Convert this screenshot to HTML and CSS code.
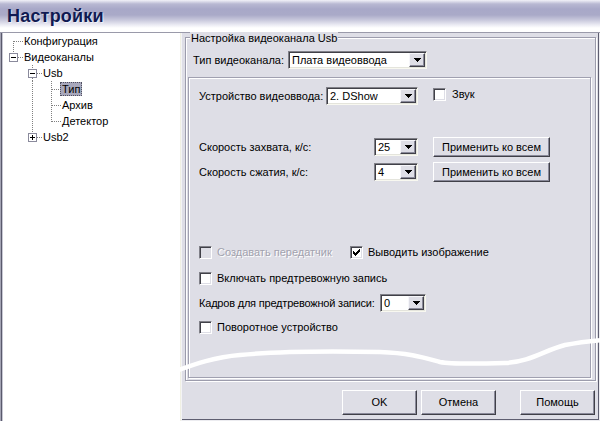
FILE: index.html
```html
<!DOCTYPE html>
<html lang="ru">
<head>
<meta charset="utf-8">
<title>Настройки</title>
<link rel="stylesheet" href="styles.css">
</head>
<body>
<div class="window">
  <header class="titlebar"><h1 class="title">Настройки</h1></header>
  <div class="main">
    <nav class="tree">
      <div class="node">
        <svg class="cell" width="19" height="16"><line class="dot" x1="8.5" y1="8" x2="8.5" y2="16"/><line class="dot" x1="9" y1="8.5" x2="19" y2="8.5"/></svg>
        <span class="label">Конфигурация</span>
      </div>
      <div class="node">
        <svg class="cell" width="19" height="16"><line class="dot" x1="8.5" y1="0" x2="8.5" y2="4"/><rect class="box" x="4.5" y="4.5" width="8" height="8"/><line class="sign" x1="6" y1="8.5" x2="11" y2="8.5"/><line class="dot" x1="13" y1="8.5" x2="19" y2="8.5"/></svg>
        <span class="label">Видеоканалы</span>
      </div>
      <div class="node">
        <span class="indent"></span>
        <svg class="cell" width="19" height="16"><line class="dot" x1="8.5" y1="0" x2="8.5" y2="4"/><line class="dot" x1="8.5" y1="13" x2="8.5" y2="16"/><rect class="box" x="4.5" y="4.5" width="8" height="8"/><line class="sign" x1="6" y1="8.5" x2="11" y2="8.5"/><line class="dot" x1="13" y1="8.5" x2="19" y2="8.5"/></svg>
        <span class="label">Usb</span>
      </div>
      <div class="node">
        <span class="indent"></span>
        <svg class="cell" width="19" height="16"><line class="dot" x1="8.5" y1="0" x2="8.5" y2="16"/></svg>
        <svg class="cell" width="19" height="16"><line class="dot" x1="8.5" y1="0" x2="8.5" y2="16"/><line class="dot" x1="9" y1="8.5" x2="19" y2="8.5"/></svg>
        <span class="label selected">Тип</span>
      </div>
      <div class="node">
        <span class="indent"></span>
        <svg class="cell" width="19" height="16"><line class="dot" x1="8.5" y1="0" x2="8.5" y2="16"/></svg>
        <svg class="cell" width="19" height="16"><line class="dot" x1="8.5" y1="0" x2="8.5" y2="16"/><line class="dot" x1="9" y1="8.5" x2="19" y2="8.5"/></svg>
        <span class="label">Архив</span>
      </div>
      <div class="node">
        <span class="indent"></span>
        <svg class="cell" width="19" height="16"><line class="dot" x1="8.5" y1="0" x2="8.5" y2="16"/></svg>
        <svg class="cell" width="19" height="16"><line class="dot" x1="8.5" y1="0" x2="8.5" y2="9"/><line class="dot" x1="9" y1="8.5" x2="19" y2="8.5"/></svg>
        <span class="label">Детектор</span>
      </div>
      <div class="node">
        <span class="indent"></span>
        <svg class="cell" width="19" height="16"><line class="dot" x1="8.5" y1="0" x2="8.5" y2="4"/><rect class="box" x="4.5" y="4.5" width="8" height="8"/><line class="sign" x1="6" y1="8.5" x2="11" y2="8.5"/><line class="sign" x1="8.5" y1="6" x2="8.5" y2="11"/><line class="dot" x1="13" y1="8.5" x2="19" y2="8.5"/></svg>
        <span class="label">Usb2</span>
      </div>
    </nav>

    <section class="content">
      <div class="group">
        <div class="group-title">Настройка видеоканала Usb</div>
        <div class="row type-row">
          <span class="lbl lbl-type">Тип видеоканала:</span>
          <div class="combo combo-type">
            <span class="combo-text">Плата видеоввода</span>
            <span class="combo-btn"><svg width="7" height="4"><path d="M0 0h7v1H0zM1 1h5v1H1zM2 2h3v1H2zM3 3h1v1H3z"/></svg></span>
          </div>
        </div>

        <div class="panel">
          <div class="row r-device">
            <span class="lbl lbl-device">Устройство видеоввода:</span>
            <div class="combo combo-device">
              <span class="combo-text">2. DShow</span>
              <span class="combo-btn"><svg width="7" height="4"><path d="M0 0h7v1H0zM1 1h5v1H1zM2 2h3v1H2zM3 3h1v1H3z"/></svg></span>
            </div>
            <label class="check check-sound"><span class="cb"></span><span class="check-text">Звук</span></label>
          </div>

          <div class="row r-speed">
            <span class="lbl lbl-speed">Скорость захвата, к/с:</span>
            <div class="combo combo-small">
              <span class="combo-text">25</span>
              <span class="combo-btn"><svg width="7" height="4"><path d="M0 0h7v1H0zM1 1h5v1H1zM2 2h3v1H2zM3 3h1v1H3z"/></svg></span>
            </div>
            <button class="btn btn-apply">Применить ко всем</button>
          </div>

          <div class="row r-speed r-second">
            <span class="lbl lbl-speed">Скорость сжатия, к/с:</span>
            <div class="combo combo-small">
              <span class="combo-text">4</span>
              <span class="combo-btn"><svg width="7" height="4"><path d="M0 0h7v1H0zM1 1h5v1H1zM2 2h3v1H2zM3 3h1v1H3z"/></svg></span>
            </div>
            <button class="btn btn-apply">Применить ко всем</button>
          </div>

          <div class="row r-check r-first-check">
            <label class="check check-first disabled"><span class="cb"></span><span class="check-text">Создавать передатчик</span></label>
            <label class="check"><span class="cb"><svg width="7" height="7"><path d="M6 0h1v1H6zM5 1h2v1H5zM0 2h1v1H0zM4 2h3v1H4zM0 3h2v1H0zM3 3h3v1H3zM0 4h5v1H0zM1 5h3v1H1zM2 6h1v1H2z"/></svg></span><span class="check-text">Выводить изображение</span></label>
          </div>

          <div class="row r-check r-gap10">
            <label class="check"><span class="cb"></span><span class="check-text">Включать предтревожную запись</span></label>
          </div>

          <div class="row r-frames">
            <span class="lbl lbl-frames">Кадров для предтревожной записи:</span>
            <div class="combo combo-frames">
              <span class="combo-text">0</span>
              <span class="combo-btn"><svg width="7" height="4"><path d="M0 0h7v1H0zM1 1h5v1H1zM2 2h3v1H2zM3 3h1v1H3z"/></svg></span>
            </div>
          </div>

          <div class="row r-check r-gap7">
            <label class="check"><span class="cb"></span><span class="check-text">Поворотное устройство</span></label>
          </div>
        </div>
      </div>

      <div class="buttons">
        <button class="btn btn-dlg">OK</button>
        <button class="btn btn-dlg">Отмена</button>
        <button class="btn btn-dlg btn-help">Помощь</button>
      </div>
    </section>
  </div>

  <svg class="scribble" width="600" height="421" viewBox="0 0 600 421">
    <path d="M176 371 C 195 364, 215 357, 240 355 C 270 352, 330 351, 380 352 C 410 353, 425 358, 440 362 C 450 364, 470 364, 505 363 C 530 362, 545 350, 565 345 C 580 342, 590 341, 602 340"/>
  </svg>
</div>
</body>
</html>
```

FILE: styles.css
```css
* { box-sizing: border-box; }

html, body {
  margin: 0;
  padding: 0;
}

body {
  width: 600px;
  height: 421px;
  overflow: hidden;
  background: #ffffff;
  font-family: "Liberation Sans", Arial, sans-serif;
  font-size: 11px;
  color: #000;
}

.window {
  position: relative;
  width: 600px;
  height: 421px;
  display: flex;
  flex-direction: column;
}

/* ---------- title ---------- */
.titlebar {
  height: 32px;
  flex: none;
  padding-left: 7px;
  background: linear-gradient(to bottom,
    #f2f2f8 0px, #b8b8d2 4px, #a8a8c8 9px, #aaaac8 15px,
    #c8c8dc 20px, #ececf4 25px, #ffffff 28px, #ffffff 32px);
}

.title {
  margin: 0;
  font-size: 18px;
  font-weight: bold;
  line-height: 32px;
  color: #101a52;
  text-shadow: 1px 1px 1px rgba(255, 255, 255, 0.7);
  letter-spacing: 0.2px;
}

/* ---------- main ---------- */
.main {
  flex: 1;
  display: flex;
  border-top: 1px solid #9a9aaa;
  min-height: 0;
}

/* ---------- tree ---------- */
.tree {
  width: 181px;
  flex: none;
  background: #ffffff;
  border-left: 1px solid #a4a4b4;
  box-shadow: inset 1px 0 0 #5a5a6c, inset 2px 0 0 #c8c8d4;
  border-right: 1px solid #f0f0e4;
  padding-left: 4px;
}

.node {
  display: flex;
  align-items: center;
  height: 16px;
}

.indent {
  width: 19px;
  flex: none;
}

.cell {
  display: block;
  flex: none;
  shape-rendering: crispEdges;
}

.dot {
  stroke: #808080;
  stroke-width: 1;
  stroke-dasharray: 1 1;
}

.box {
  fill: #ffffff;
  stroke: #8a8a9c;
  stroke-width: 1;
}

.sign {
  stroke: #000;
  stroke-width: 1;
}

.label {
  line-height: 14px;
  white-space: nowrap;
}

.selected {
  background: #a8a8bc;
  outline: 1px dotted #505060;
  outline-offset: -1px;
  padding: 0 2px;
  margin-left: -2px;
}

/* ---------- content ---------- */
.content {
  flex: 1;
  display: flex;
  flex-direction: column;
  background: #dedee6;
  border-left: 1px solid #f4f4f6;
  border-right: 1px solid #ececf0;
  border-bottom: 1px solid #ececf0;
  box-shadow: inset -1px -1px 0 #5e5e70;
}

.group {
  margin: 4px 3px 0 3px;
  height: 344px;
  flex: none;
  display: flex;
  flex-direction: column;
  border: 1px solid #9c9cac;
  box-shadow: inset 1px 1px 0 #ffffff, 1px 1px 0 #ffffff;
  padding: 0 4px 2px 2px;
}

.group-title {
  width: fit-content;
  margin: -6px 0 0 2px;
  padding: 0 1px;
  height: 13px;
  line-height: 13px;
  background: #dedee6;
}

.row {
  display: flex;
  align-items: center;
  white-space: nowrap;
}

.type-row {
  margin-top: 6px;
  height: 18px;
  padding-left: 5px;
}

.lbl {
  flex: none;
  line-height: 13px;
  overflow: hidden;
}

.lbl-type { width: 95px; }
.lbl-device { width: 127px; }
.lbl-speed { width: 175px; }
.lbl-frames {
  width: 181px;
  letter-spacing: -0.2px;
}

/* combo box */
.combo {
  flex: none;
  height: 18px;
  display: flex;
  align-items: center;
  background: #ffffff;
  border: 1px solid;
  border-color: #808088 #f8f8f0 #f8f8f0 #808088;
  box-shadow: inset 1px 1px 0 #404048, inset -1px -1px 0 #e4e4dc;
  padding: 1px;
}

.combo-text {
  flex: 1;
  padding-left: 2px;
  line-height: 13px;
  overflow: hidden;
}

.combo-btn {
  flex: none;
  width: 16px;
  height: 14px;
  display: flex;
  align-items: center;
  justify-content: center;
  background: #dedee6;
  border: 1px solid;
  border-color: #f6f6fa #404048 #404048 #f6f6fa;
  box-shadow: inset -1px -1px 0 #8a8a9a;
}

.combo-btn svg {
  display: block;
  fill: #000;
  shape-rendering: crispEdges;
}

.combo-type { width: 139px; }
.combo-device { width: 92px; }
.combo-small { width: 44px; }
.combo-frames { width: 46px; }

/* buttons */
.btn {
  font-family: "Liberation Sans", Arial, sans-serif;
  font-size: 11px;
  color: #000;
  background: #dedee6;
  border: 1px solid;
  border-color: #ffffff #404048 #404048 #ffffff;
  box-shadow: inset -1px -1px 0 #8a8a9a;
  padding: 0;
  margin: 0;
  line-height: 13px;
}

.btn-apply {
  width: 117px;
  height: 20px;
  margin-left: 15px;
  flex: none;
}

/* check boxes */
.check {
  display: flex;
  align-items: center;
  flex: none;
}

.cb {
  width: 13px;
  height: 13px;
  flex: none;
  background: #ffffff;
  border: 1px solid;
  border-color: #808088 #ffffff #ffffff #808088;
  box-shadow: inset 1px 1px 0 #404048, inset -1px -1px 0 #dedee6;
  padding: 2px;
}

.cb svg {
  display: block;
  fill: #000;
  shape-rendering: crispEdges;
}

.check-text {
  margin-left: 5px;
  line-height: 13px;
}

.disabled .cb {
  background: #dedee6;
}

.disabled .check-text {
  color: #a2a2ae;
  text-shadow: 1px 1px 0 #ffffff;
}

.check-first { width: 151px; }

.check-sound {
  align-self: flex-start;
  margin-left: 15px;
  margin-top: 1px;
}

.check-sound .check-text {
  margin-left: 6px;
  margin-top: -1px;
}

/* inner panel */
.panel {
  flex: 1;
  margin-top: 8px;
  border: 1px solid #a0a0b0;
  box-shadow: inset 1px 1px 0 #ffffff, 1px 1px 0 #ffffff;
  padding-left: 10px;
}

.r-device {
  margin-top: 9px;
  height: 18px;
}

.r-speed {
  margin-top: 32px;
  height: 20px;
}

.r-speed.r-second {
  margin-top: 5px;
}

.r-check {
  height: 16px;
}

.r-first-check { margin-top: 62px; }
.r-gap10 { margin-top: 10px; }
.r-gap7 { margin-top: 7px; }

.r-frames {
  margin-top: 8px;
  height: 18px;
}

/* dialog buttons */
.buttons {
  display: flex;
  justify-content: flex-end;
  gap: 4px;
  margin-top: 9px;
  padding-right: 4px;
  height: 25px;
  flex: none;
}

.btn-dlg {
  width: 75px;
  height: 25px;
}

.btn-help {
  margin-left: 20px;
}

/* white scribble drawn over the screenshot */
.scribble {
  position: absolute;
  left: 0;
  top: 0;
  pointer-events: none;
}

.scribble path {
  fill: none;
  stroke: #ffffff;
  stroke-width: 4.5;
  stroke-linecap: round;
  stroke-linejoin: round;
}
```
